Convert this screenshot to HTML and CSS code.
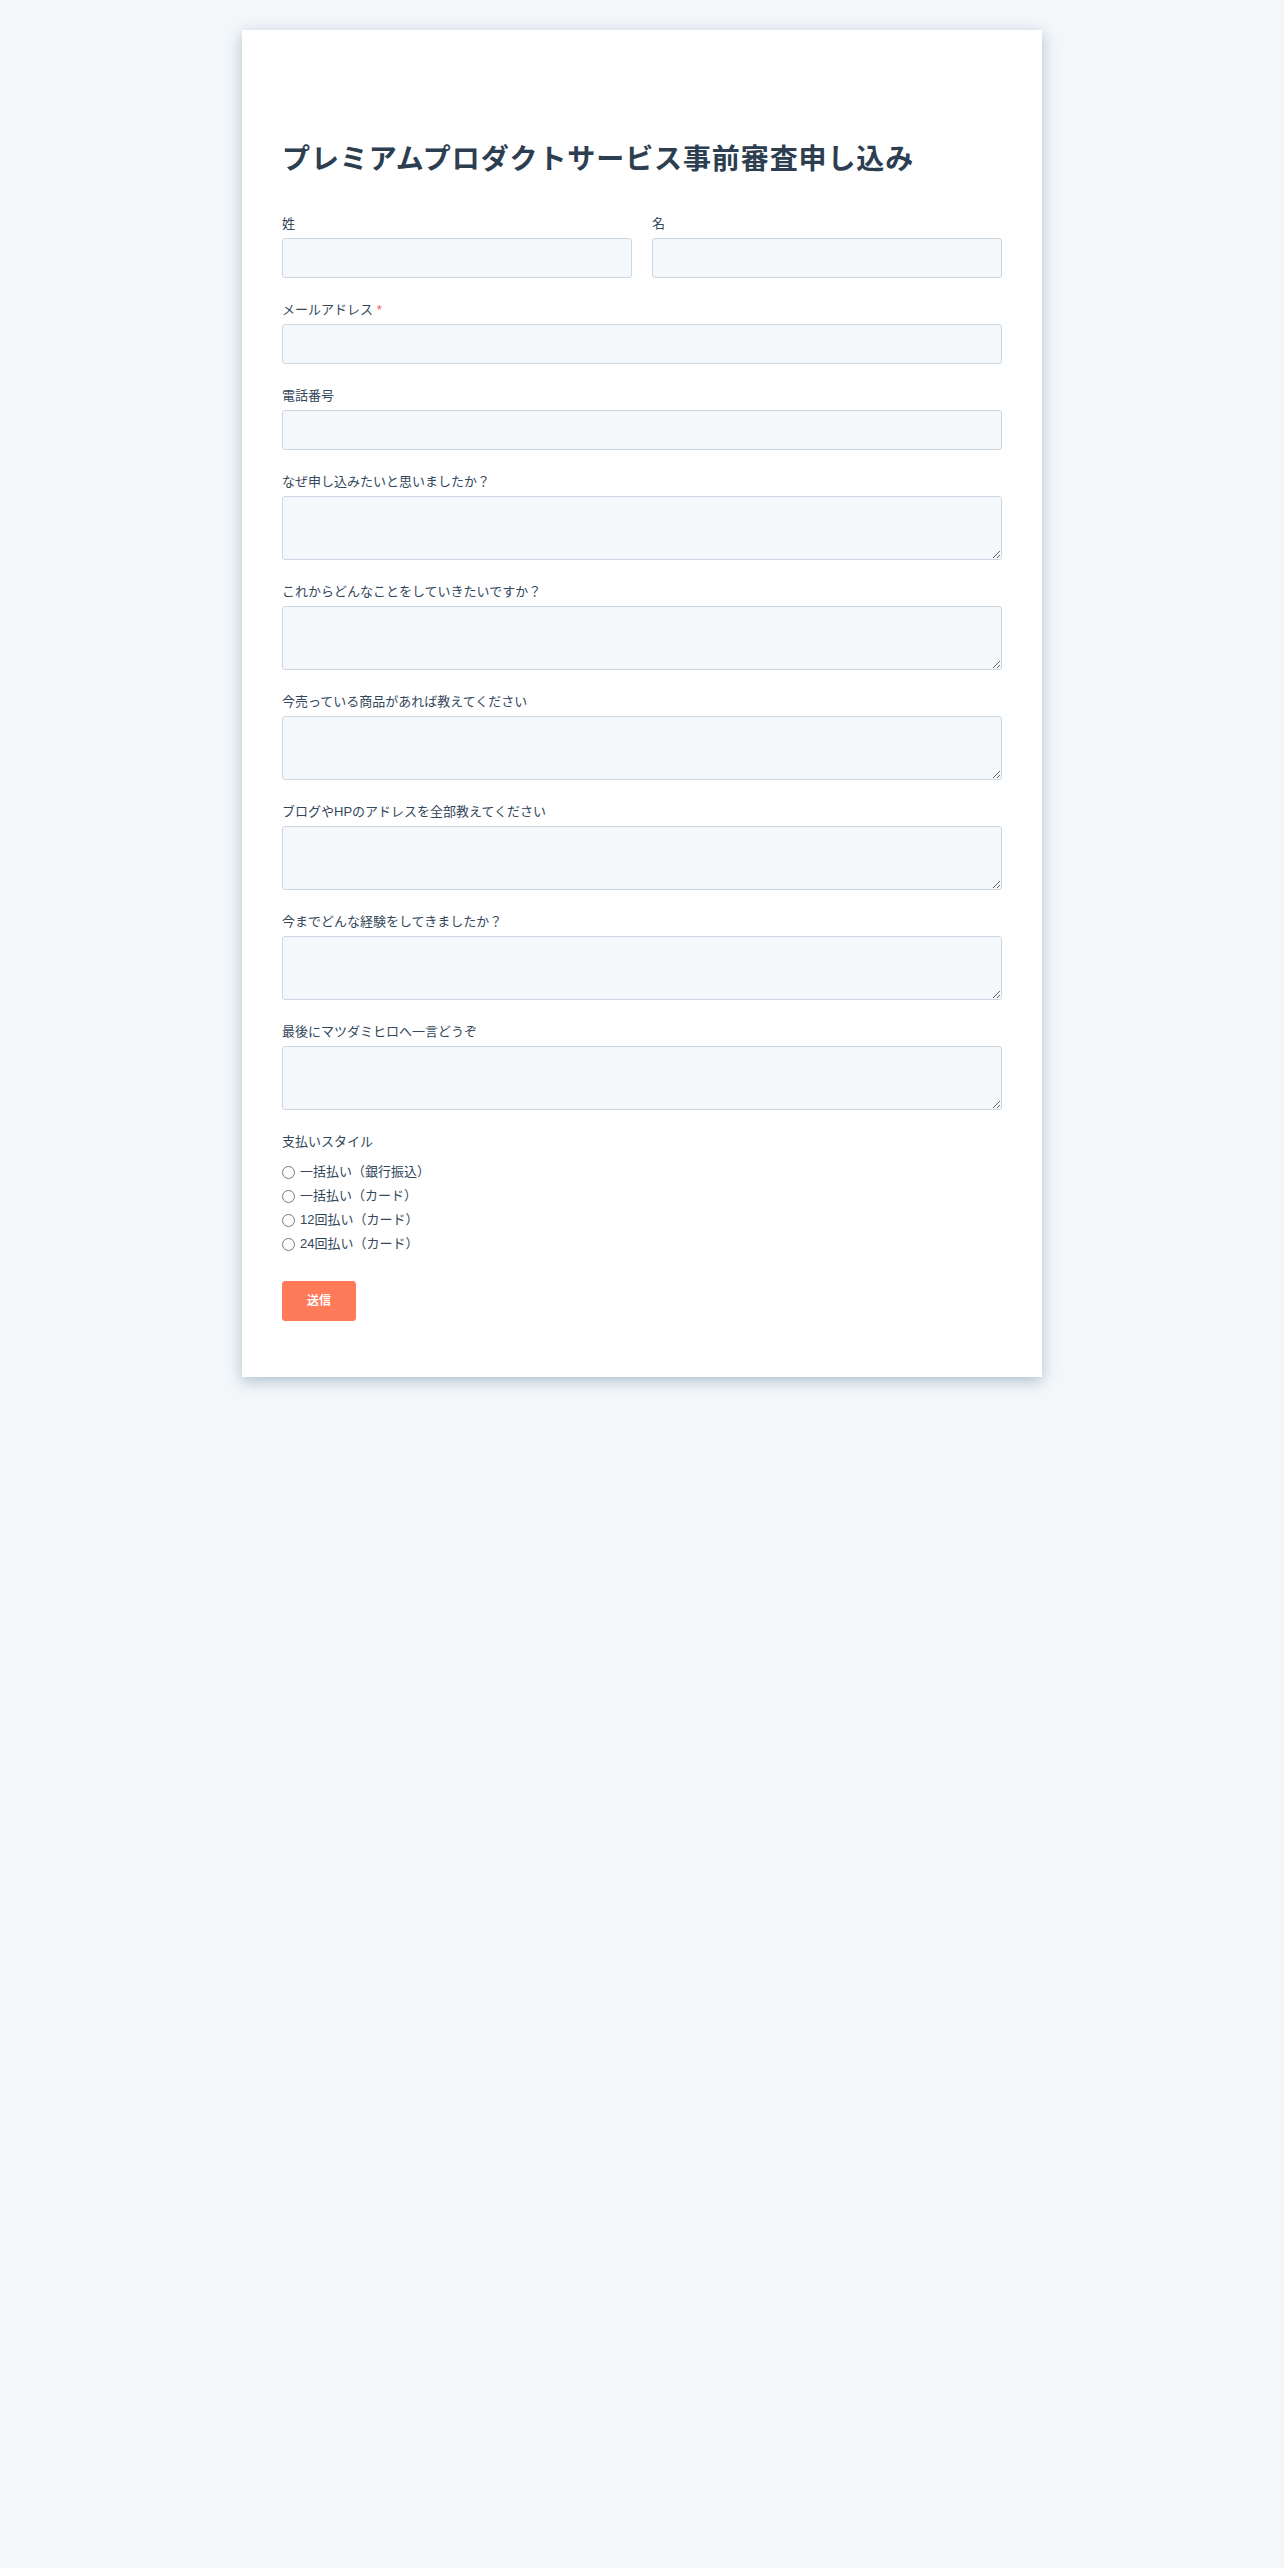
FILE: index.html
```html
<!DOCTYPE html>
<html lang="ja">
<head>
    <meta charset="UTF-8">
    <meta name="viewport" content="width=device-width, initial-scale=1.0">
    <title>プレミアムプロダクトサービス事前審査申し込み</title>
    <link rel="stylesheet" href="styles.css">
</head>
<body>

<section class="form-card">
    <h1>プレミアムプロダクトサービス事前審査申し込み</h1>

    <form id="apply-form">
        <div class="field-row">
            <div class="field">
                <label for="lastname">姓</label>
                <input type="text" id="lastname" name="lastname">
            </div>
            <div class="field">
                <label for="firstname">名</label>
                <input type="text" id="firstname" name="firstname">
            </div>
        </div>

        <div class="field">
            <label for="email">メールアドレス <span class="required">*</span></label>
            <input type="email" id="email" name="email">
        </div>

        <div class="field">
            <label for="phone">電話番号</label>
            <input type="tel" id="phone" name="phone">
        </div>

        <div class="field">
            <label for="why">なぜ申し込みたいと思いましたか？</label>
            <textarea id="why" name="why"></textarea>
        </div>

        <div class="field">
            <label for="future">これからどんなことをしていきたいですか？</label>
            <textarea id="future" name="future"></textarea>
        </div>

        <div class="field">
            <label for="products">今売っている商品があれば教えてください</label>
            <textarea id="products" name="products"></textarea>
        </div>

        <div class="field">
            <label for="sites">ブログやHPのアドレスを全部教えてください</label>
            <textarea id="sites" name="sites"></textarea>
        </div>

        <div class="field">
            <label for="career">今までどんな経験をしてきましたか？</label>
            <textarea id="career" name="career"></textarea>
        </div>

        <div class="field">
            <label for="message">最後にマツダミヒロへ一言どうぞ</label>
            <textarea id="message" name="message"></textarea>
        </div>

        <div class="field">
            <label>支払いスタイル</label>
            <ul class="radio-list">
                <li><label><input type="radio" name="payment" value="bank">一括払い（銀行振込）</label></li>
                <li><label><input type="radio" name="payment" value="card">一括払い（カード）</label></li>
                <li><label><input type="radio" name="payment" value="card12">12回払い（カード）</label></li>
                <li><label><input type="radio" name="payment" value="card24">24回払い（カード）</label></li>
            </ul>
        </div>

        <button type="submit">送信</button>
    </form>
</section>

</body>
</html>
```

FILE: styles.css
```css
body {
    font-family: "Liberation Sans", Arial, "Noto Sans CJK JP", sans-serif;
    background: #f3f7fa;
    color: #33475b;
    margin: 0;
    padding: 30px 0;
}

.form-card {
    width: 800px;
    box-sizing: border-box;
    margin: 0 auto;
    padding: 40px 40px 56px;
    background: white;
    box-shadow: 0 4px 14px rgba(60, 100, 130, 0.38);
}

h1 {
    font-size: 28px;
    line-height: 34px;
    letter-spacing: 0.9px;
    font-weight: bold;
    color: #2d3e50;
    margin: 73px 0 37px;
}

.field-row {
    display: grid;
    grid-template-columns: 1fr 1fr;
    gap: 20px;
}

.field {
    margin-bottom: 22px;
}

.field > label {
    display: block;
    font-size: 13px;
    line-height: 20px;
    margin-bottom: 4px;
}

.required {
    color: #f2545b;
}

.field input[type="text"],
.field input[type="email"],
.field input[type="tel"],
.field textarea {
    display: block;
    width: 100%;
    box-sizing: border-box;
    height: 40px;
    padding: 8px 10px;
    background: #f5f8fa;
    border: 1px solid #cbd6e2;
    border-radius: 3px;
    font-family: inherit;
    font-size: 14px;
    color: #33475b;
    margin: 0;
}

.field textarea {
    height: 64px;
}

.radio-list {
    list-style: none;
    margin: 8px 0 0;
    padding: 0;
}

.radio-list li {
    font-size: 13px;
    line-height: 24px;
}

.radio-list label {
    display: flex;
    align-items: center;
}

.radio-list input {
    margin: 0 5px 0 0;
    width: 13px;
    height: 13px;
}

button {
    background: #ff7a59;
    color: white;
    font-family: inherit;
    font-size: 12px;
    font-weight: bold;
    line-height: 14px;
    padding: 12px 24px;
    border: 1px solid #ff7a59;
    border-radius: 3px;
    margin-top: 3px;
    cursor: pointer;
}
```
